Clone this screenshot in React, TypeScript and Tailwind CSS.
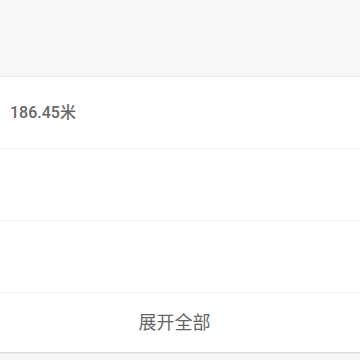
export default function App() {
  const rows = ["186.45米", "", ""];
  return (
    <div
      className="h-[360px] w-[360px] overflow-hidden bg-[#f7f7f7]"
      style={{ fontFamily: 'Roboto, "Noto Sans CJK SC", sans-serif' }}
    >
      <div className="h-[76px]" />
      <div className="border-t border-[#ebebeb] bg-white shadow-[0_1px_2px_rgba(0,0,0,0.15)]">
        {rows.map((r, i) => (
          <div key={i} className="flex h-[72px] items-center border-b border-[#f0f0f0] px-[10px]">
            <span className="text-[16px] font-medium text-[#666]">{r}</span>
          </div>
        ))}
        <div className="flex h-[59px] items-center justify-center pr-[11px]">
          <span className="text-[18px] text-[#666]">展开全部</span>
        </div>
      </div>
    </div>
  );
}
